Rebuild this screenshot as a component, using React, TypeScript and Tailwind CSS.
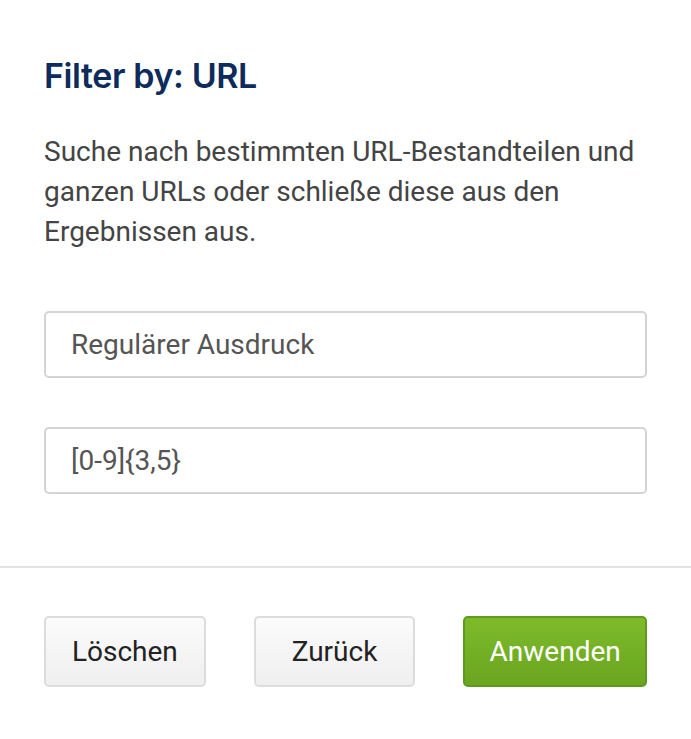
export default function App() {
  const roboto = { fontFamily: "Roboto, 'Liberation Sans', sans-serif" };

  return (
    <div className="min-h-[739px] w-[691px] bg-white" style={roboto}>
      <div className="px-[44px] pt-[56px]">
        <h1
          className="text-[34px] leading-[40px] font-semibold text-[#0d2b5c] tracking-[-0.4px]"
          style={{ fontFamily: "Inter, 'Liberation Sans', sans-serif" }}
        >
          Filter by: URL
        </h1>
        <p className="mt-[36px] text-[28px] leading-[40px] text-[#444]">
          Suche nach bestimmten URL-Bestandteilen und ganzen URLs oder schließe diese aus den Ergebnissen aus.
        </p>

        <div className="mt-[59px] flex flex-col gap-[49px]">
          <div className="h-[67px] rounded-[5px] border-2 border-[#d4d4d4] px-[25px] flex items-center text-[28px] text-[#555]">
            Regulärer Ausdruck
          </div>
          <div className="h-[67px] rounded-[5px] border-2 border-[#d4d4d4] px-[25px] flex items-center text-[28px] text-[#555]">
            [0-9]{"{3,5}"}
          </div>
        </div>
      </div>

      <div className="mt-[72px] h-[2px] bg-[#e2e2e2]" />

      <div className="px-[44px] pt-[48px] flex gap-[48px]">
        <button className="h-[71px] w-[162px] rounded-[5px] border-2 border-[#dcdcdc] bg-gradient-to-b from-[#fbfbfb] to-[#efefef] text-[28px] text-[#222]">
          Löschen
        </button>
        <button className="h-[71px] w-[162px] rounded-[5px] border-2 border-[#dcdcdc] bg-gradient-to-b from-[#fbfbfb] to-[#efefef] text-[28px] text-[#222]">
          Zurück
        </button>
        <button className="h-[71px] w-[184px] rounded-[5px] border-2 border-[#5f9a1f] bg-gradient-to-b from-[#7ebb2a] to-[#6aa520] text-[28px] text-white">
          Anwenden
        </button>
      </div>
    </div>
  );
}
